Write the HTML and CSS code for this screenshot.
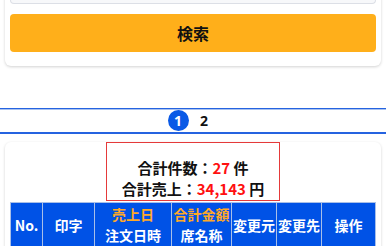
FILE: index.html
```html
<!DOCTYPE html>
<html lang="ja">
<head>
    <meta charset="UTF-8">
    <meta name="viewport" content="width=device-width, initial-scale=1.0">
    <title>売上一覧</title>
    <link rel="stylesheet" href="styles.css">
</head>
<body>
    <div class="card search-card">
        <div class="field"></div>
        <button type="button" class="btn-search">検索</button>
    </div>

    <div class="pager">
        <span class="page current">1</span>
        <span class="page">2</span>
    </div>

    <div class="card list-card">
        <div class="summary">
            <p>合計件数：<span class="num">27</span> 件</p>
            <p>合計売上：<span class="num">34,143</span> 円</p>
        </div>
        <table class="list">
            <thead>
                <tr>
                    <th class="c-no">No.</th>
                    <th class="c-print">印字</th>
                    <th class="c-date"><span class="hl">売上日</span><br>注文日時</th>
                    <th class="c-total"><span class="hl">合計金額</span><br>席名称</th>
                    <th class="c-from">変更元</th>
                    <th class="c-to">変更先</th>
                    <th class="c-op">操作</th>
                </tr>
            </thead>
        </table>
    </div>
</body>
</html>
```

FILE: styles.css
```css
/* Global */
body {
    margin: 0;
    font-family: "Noto Sans CJK JP", "Noto Sans", sans-serif;
    background: #fff;
    color: #111;
}

/* Cards */
.card {
    margin: 0 5px;
    padding: 0 5px;
    background: #fff;
    border-radius: 6px;
    box-shadow: 0 1px 3px rgba(0, 0, 0, 0.18);
}

.search-card {
    margin-top: -20px;
    padding-bottom: 14px;
}

.field {
    height: 23px;
    border: 1px solid #dcdfe6;
    border-top: none;
    border-radius: 0 0 4px 4px;
    background: #f7f8fa;
}

.btn-search {
    display: block;
    width: 100%;
    height: 38px;
    margin-top: 10px;
    border: none;
    border-radius: 4px;
    background: #ffaf1a;
    color: #111;
    font-family: inherit;
    font-size: 16px;
    font-weight: 700;
}

/* Pagination */
.pager {
    margin-top: 42px;
    height: 23px;
    border-top: 1px solid #2563e0;
    box-shadow: inset 0 1px 0 #a9c2f0;
    border-bottom: 2px solid #2563e0;
    display: flex;
    justify-content: center;
    align-items: center;
    gap: 5px;
    padding-right: 4px;
}

.page {
    width: 21px;
    height: 21px;
    line-height: 21px;
    text-align: center;
    font-family: "Open Sans", sans-serif;
    font-size: 14px;
    font-weight: 700;
    border-radius: 50%;
}

.page.current {
    background: #0a5ae6;
    color: #fff;
}

/* List card */
.list-card {
    margin-top: 16px;
    padding-bottom: 10px;
}

.summary {
    width: 172px;
    margin: -8px auto 0;
    border: 1px solid #e53a3a;
    background: #fff;
    padding: 14px 0 1px;
    text-align: center;
    font-size: 15px;
    font-weight: 700;
    line-height: 21px;
}

.summary p {
    margin: 0;
}

.num {
    color: #ff1010;
}

/* Table */
.list {
    width: 100%;
    margin-top: 1px;
    border-collapse: collapse;
    table-layout: fixed;
}

.list th {
    background: #0052e6;
    color: #fff;
    border: 1px solid #a8bfe8;
    font-size: 14px;
    font-weight: 700;
    line-height: 21px;
    padding: 1px 0 2px;
    white-space: nowrap;
    overflow: hidden;
}

.list .hl {
    color: #ffa928;
}

.c-no { width: 31px; }
.c-print { width: 51px; }
.c-date { width: 76px; }
.c-total { width: 59px; }
.c-from { width: 44px; }
.c-to { width: 44px; }
.c-op { width: 53px; }
```
